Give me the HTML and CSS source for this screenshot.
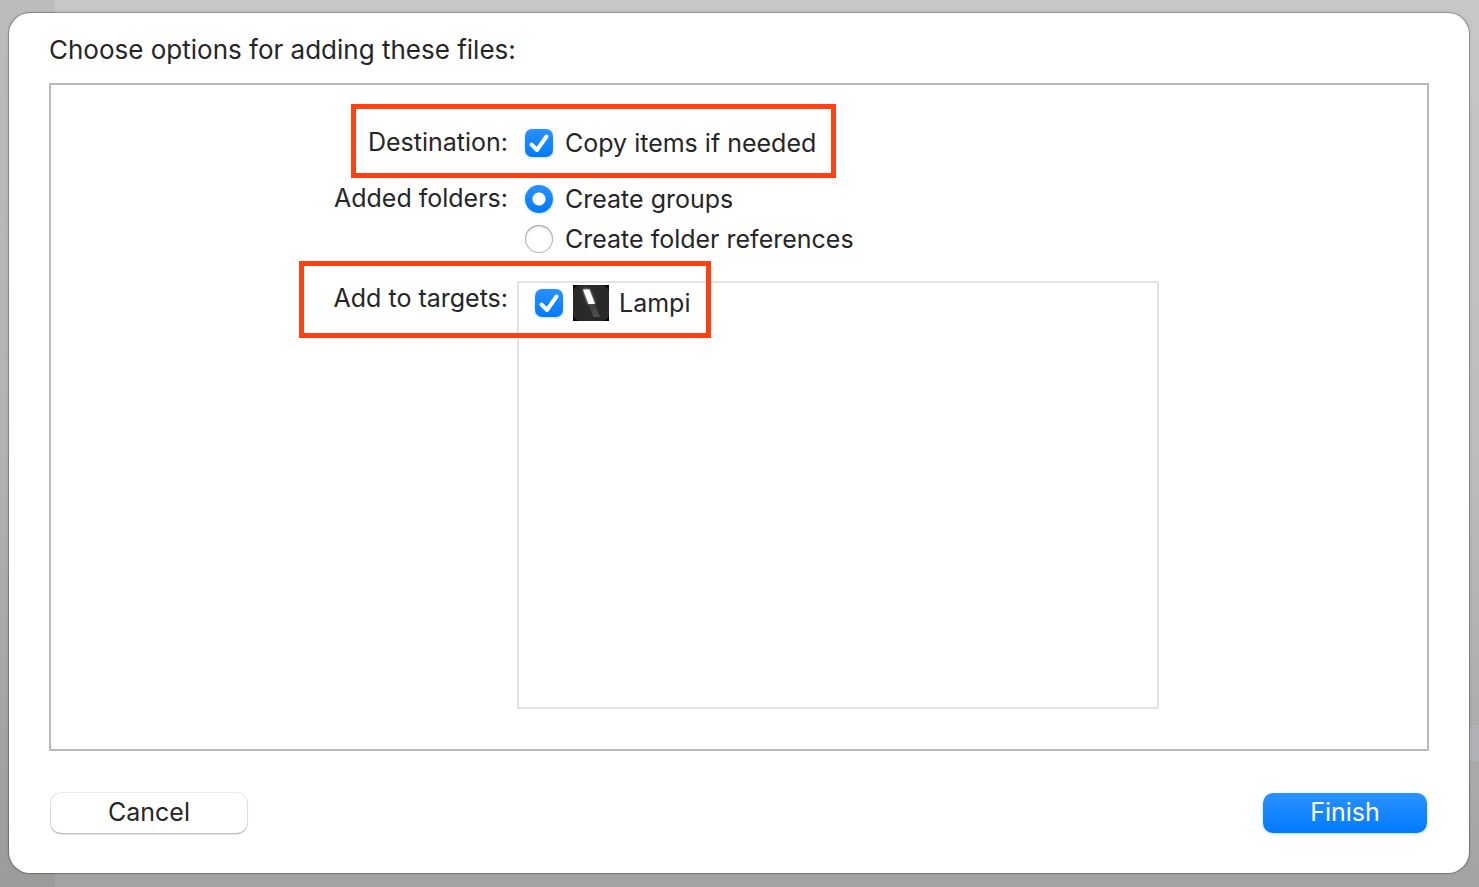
FILE: index.html
```html
<!DOCTYPE html>
<html lang="en">
<head>
<meta charset="utf-8">
<title>Add files</title>
<link rel="stylesheet" href="styles.css">
</head>
<body>
<form class="sheet">
  <h1 class="title">Choose options for adding these files:</h1>
  <div class="panel">
    <span class="label" id="destination">Destination:</span>
    <div class="field" role="group" aria-labelledby="destination">
      <label class="option"><input class="check" type="checkbox" checked>Copy items if needed</label>
      <div class="highlight highlight-destination"></div>
    </div>
    <span class="label" id="folders">Added folders:</span>
    <div class="field" role="radiogroup" aria-labelledby="folders">
      <label class="option"><input class="radio" type="radio" name="folders" checked>Create groups</label>
      <label class="option"><input class="radio" type="radio" name="folders">Create folder references</label>
    </div>
    <span class="label label-targets" id="targets">Add to targets:</span>
    <div class="field targets" role="group" aria-labelledby="targets">
      <label class="target"><input class="check" type="checkbox" checked>
        <svg class="app-icon" viewBox="0 0 36 36" aria-hidden="true">
          <defs>
            <filter id="glow" x="-60%" y="-60%" width="220%" height="220%"><feGaussianBlur stdDeviation="1.8"/></filter>
            <linearGradient id="handle" x1="0" y1="0" x2="0" y2="1"><stop offset="0" stop-color="#3c3c3c"/><stop offset="1" stop-color="#505050"/></linearGradient>
          </defs>
          <path fill="#000" d="M0 0h36v36H0z"/>
          <rect width="36" height="36" rx="7" fill="#292929"/>
          <path d="M10 4h6l6 15h-7z" fill="#fff" opacity=".65" filter="url(#glow)"/>
          <path d="M15.500 19.500h6.500l5 12.500h-6.500z" fill="url(#handle)"/>
          <path d="M10 4.500h6.500l5.500 14.500h-6.500z" fill="#fff"/>
        </svg>
        Lampi</label>
      <div class="highlight highlight-targets"></div>
    </div>
  </div>
  <div class="actions">
    <button class="button cancel" type="button">Cancel</button>
    <button class="button finish" type="submit">Finish</button>
  </div>
</form>
</body>
</html>
```
FILE: styles.css
```css
* { box-sizing: border-box; }

body {
  margin: 0;
  min-height: 100vh;
  display: flex;
  padding: 13px 10px 14px 9px;
  font: 25px/36px Inter, "Liberation Sans", sans-serif;
  color: #262626;
  background:
    linear-gradient(#b0b1b5, #b0b1b5) right 725px / 10px 36px no-repeat,
    linear-gradient(rgba(90, 90, 70, .1), rgba(90, 90, 70, .1)) left top / 55px 100% no-repeat,
    linear-gradient(#c7c7c7, #bdbdbd 50%, #a3a3a3);
}

.sheet {
  flex: 1;
  display: flex;
  flex-direction: column;
  padding: 19px 40px 40px;
  border-radius: 21px;
  background: #fff;
  box-shadow: 0 0 0 1px rgba(0, 0, 0, .18), 0 0 3px rgba(0, 0, 0, .3);
}

.title { margin: 0 0 15px; font: inherit; font-size: 26px; }

.panel {
  flex: 1;
  display: grid;
  grid-template-columns: 457fr 651fr 268fr;
  grid-template-rows: auto auto 1fr;
  padding: 38px 0 40px;
  border: 2px solid #bababa;
}

.label { grid-column: 1; line-height: 38px; text-align: right; }
.label-targets { padding-top: 4px; }
.field { grid-column: 2; position: relative; margin: 0 0 16px 9px; }
.option { display: flex; align-items: center; gap: 12px; height: 40px; padding-left: 8px; }

.targets { margin: 6px 0 0 9px; border: 2px solid #e3e3e3; }
.target { display: flex; align-items: center; gap: 10px; height: 40px; padding-left: 16px; }
.app-icon { width: 36px; height: 36px; }

.check, .radio {
  appearance: none;
  flex: none;
  width: 28px;
  height: 28px;
  margin: 0;
  box-shadow: inset 0 1px 3px rgba(0, 0, 0, .25), inset 0 0 0 1px #c6c6c6;
}
.check { border-radius: 7px; }
.radio { border-radius: 50%; }
.check:checked, .radio:checked {
  background: linear-gradient(#2b91ff, #007aff);
  box-shadow: 0 1px 3px rgba(0, 122, 255, .25);
}
.check:checked {
  background:
    url("data:image/svg+xml,%3Csvg xmlns='http://www.w3.org/2000/svg' viewBox='0 0 28 28'%3E%3Cpath d='M6.500 15.500l5.500 5.500L21.500 7.500' fill='none' stroke='white' stroke-width='4' stroke-linecap='round' stroke-linejoin='round'/%3E%3C/svg%3E"),
    linear-gradient(#2b91ff, #007aff);
}
.radio:checked {
  background: radial-gradient(circle, #fff 6px, transparent 7px), linear-gradient(#2b91ff, #007aff);
}

.highlight { position: absolute; border: 5px solid #ff4013; pointer-events: none; }
.highlight-destination { left: -166px; top: -19px; width: 485px; height: 74px; }
.highlight-targets { left: -220px; top: -22px; width: 412px; height: 77px; }

.actions { display: flex; justify-content: space-between; margin-top: 42px; padding: 0 2px; }
.button {
  height: 40px;
  padding: 0 0 2px;
  border: 0;
  border-radius: 10px;
  font: inherit;
}
.cancel {
  width: 196px;
  color: #262626;
  background: #fff;
  box-shadow: 0 0 0 1px rgba(0, 0, 0, .06), 0 1px 2px rgba(0, 0, 0, .3);
}
.finish {
  width: 164px;
  color: #fff;
  background: linear-gradient(#2b91ff, #007aff);
  box-shadow: 0 1px 3px rgba(0, 122, 255, .3);
}
```
